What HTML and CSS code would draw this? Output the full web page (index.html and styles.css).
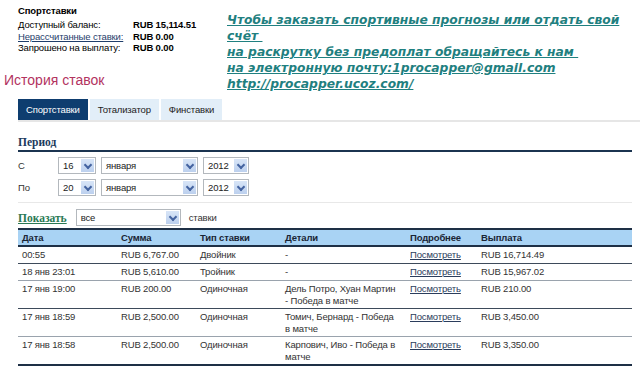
FILE: index.html
```html
<!DOCTYPE html>
<html lang="ru">
<head>
    <meta charset="UTF-8">
    <title>История ставок</title>
    <link rel="stylesheet" href="styles.css">
</head>
<body>
    <div class="top">
        <div class="left">
            <div class="account">
                <div class="account-title">Спортставки</div>
                <div class="balance-row"><span class="label">Доступный баланс:</span><b>RUB 15,114.51</b></div>
                <div class="balance-row"><a href="#" class="label link">Нерассчитанные ставки:</a><b>RUB 0.00</b></div>
                <div class="balance-row"><span class="label">Запрошено на выплату:</span><b>RUB 0.00</b></div>
            </div>
            <h1 class="history">История ставок</h1>
        </div>
        <div class="promo">
            <a href="#">Чтобы заказать спортивные прогнозы или отдать свой счёт&nbsp;<br>
            на раскрутку без предоплат обращайтесь к нам&nbsp;<br>
            на электронную почту:1procapper@gmail.com<br>
            http://procapper.ucoz.com/</a>
        </div>
    </div>

    <div class="tabs">
        <span class="tab active">Спортставки</span>
        <span class="tab">Тотализатор</span>
        <span class="tab">Финставки</span>
    </div>

    <div class="content">
        <div class="period">
            <h2 class="section-title">Период</h2>
            <div class="date-row">
                <span class="date-label">С</span>
                <div class="select day"><span>16</span><i class="arrow"></i></div>
                <div class="select month"><span>января</span><i class="arrow"></i></div>
                <div class="select year"><span>2012</span><i class="arrow"></i></div>
            </div>
            <div class="date-row">
                <span class="date-label">По</span>
                <div class="select day"><span>20</span><i class="arrow"></i></div>
                <div class="select month"><span>января</span><i class="arrow"></i></div>
                <div class="select year"><span>2012</span><i class="arrow"></i></div>
            </div>
        </div>

        <div class="filter">
            <a href="#" class="show-link">Показать</a>
            <div class="select kind"><span>все</span><i class="arrow"></i></div>
            <span>ставки</span>
        </div>

        <table class="bets">
            <colgroup>
                <col style="width: 99px">
                <col style="width: 79px">
                <col style="width: 85px">
                <col style="width: 125px">
                <col style="width: 71px">
                <col>
            </colgroup>
            <thead>
                <tr>
                    <th>Дата</th>
                    <th>Сумма</th>
                    <th>Тип ставки</th>
                    <th>Детали</th>
                    <th>Подробнее</th>
                    <th>Выплата</th>
                </tr>
            </thead>
            <tbody>
                <tr>
                    <td>00:55</td>
                    <td>RUB 6,767.00</td>
                    <td>Двойник</td>
                    <td>-</td>
                    <td><a href="#">Посмотреть</a></td>
                    <td>RUB 16,714.49</td>
                </tr>
                <tr>
                    <td>18 янв 23:01</td>
                    <td>RUB 5,610.00</td>
                    <td>Тройник</td>
                    <td>-</td>
                    <td><a href="#">Посмотреть</a></td>
                    <td>RUB 15,967.02</td>
                </tr>
                <tr class="tall">
                    <td>17 янв 19:00</td>
                    <td>RUB 200.00</td>
                    <td>Одиночная</td>
                    <td>Дель Потро, Хуан Мартин - Победа в матче</td>
                    <td><a href="#">Посмотреть</a></td>
                    <td>RUB 210.00</td>
                </tr>
                <tr class="tall">
                    <td>17 янв 18:59</td>
                    <td>RUB 2,500.00</td>
                    <td>Одиночная</td>
                    <td>Томич, Бернард - Победа в матче</td>
                    <td><a href="#">Посмотреть</a></td>
                    <td>RUB 3,450.00</td>
                </tr>
                <tr class="tall">
                    <td>17 янв 18:58</td>
                    <td>RUB 2,500.00</td>
                    <td>Одиночная</td>
                    <td>Карпович, Иво - Победа в матче</td>
                    <td><a href="#">Посмотреть</a></td>
                    <td>RUB 3,350.00</td>
                </tr>
            </tbody>
        </table>
    </div>
</body>
</html>
```

FILE: styles.css
```css
* {
    margin: 0;
    padding: 0;
    box-sizing: border-box;
}

body {
    background: #fff;
    font-family: 'Liberation Sans', Arial, sans-serif;
    font-size: 9.5px;
    letter-spacing: -0.15px;
    color: #333;
    width: 640px;
    overflow: hidden;
}

a {
    color: #2b3d5c;
}

/* top: account block + promo */
.top {
    display: flex;
    height: 99px;
}

.left {
    width: 227px;
    flex-shrink: 0;
}

.account {
    padding: 5px 0 0 18px;
    color: #000;
}

.account-title {
    font-weight: bold;
    line-height: 12px;
    margin-bottom: 2px;
}

.balance-row {
    display: flex;
    line-height: 11.5px;
}

.balance-row .label {
    width: 115px;
}

.balance-row .link {
    color: #1f3e6b;
}

.history {
    font-size: 14px;
    font-weight: normal;
    letter-spacing: 0;
    color: #b3335f;
    padding: 18px 0 0 4px;
    line-height: 16px;
}

.promo {
    padding-top: 12px;
    font-family: 'DejaVu Sans', Verdana, sans-serif;
    font-size: 12.3px;
    font-style: italic;
    font-weight: bold;
    letter-spacing: 0;
    line-height: 16px;
}

.promo a {
    color: #1f8080;
}

/* tabs */
.tabs {
    display: flex;
    margin-left: 18px;
    border-bottom: 2px solid #e6e6e6;
}

.tab {
    padding: 0 8px;
    height: 21px;
    line-height: 21px;
    background: #e2eef8;
    color: #222;
}

.tab + .tab {
    margin-left: 2px;
}

.tab.active {
    background: #0e3d6f;
    color: #fff;
}

/* period filter */
.content {
    padding: 14px 8px 0 18px;
}

.section-title {
    font-family: 'Liberation Serif', 'Times New Roman', serif;
    font-size: 11.5px;
    font-weight: bold;
    letter-spacing: 0;
    color: #1c3a5c;
    line-height: 12px;
    padding-bottom: 2px;
    border-bottom: 2px solid #1b3450;
}

.date-row {
    display: flex;
    align-items: center;
    gap: 5px;
    margin-top: 5px;
}

.date-row + .date-row {
    margin-top: 5px;
}

.date-label {
    width: 35px;
}

.select {
    display: flex;
    align-items: center;
    justify-content: space-between;
    height: 17px;
    border: 1px solid #b3b8bd;
    background: #fff;
    padding: 0 1px 0 4px;
    color: #222;
}

.select.day { width: 38px; }
.select.month { width: 97px; }
.select.year { width: 46px; }
.select.kind { width: 105px; }

.arrow {
    width: 13px;
    height: 13px;
    background: linear-gradient(#d8e5f7, #bcd0ee);
    position: relative;
}

.arrow::after {
    content: '';
    position: absolute;
    left: 4px;
    top: 3px;
    width: 4px;
    height: 4px;
    border: solid #4463a0;
    border-width: 0 2px 2px 0;
    transform: rotate(45deg);
}

.filter {
    display: flex;
    align-items: center;
    gap: 8px;
    margin-top: 6px;
    padding-top: 6px;
    border-top: 1px solid #e8e8e8;
}

.show-link {
    font-family: 'Liberation Serif', 'Times New Roman', serif;
    font-size: 11.5px;
    font-weight: bold;
    letter-spacing: 0;
    color: #2b7a55;
    margin-right: 1px;
}

/* bets table */
.bets {
    width: 100%;
    margin-top: 2px;
    border-collapse: separate;
    border-spacing: 0;
    table-layout: fixed;
}

.bets th {
    text-align: left;
    font-weight: bold;
    color: #1a2535;
    background: #a9d3f4;
    line-height: 15px;
    padding: 0 4px;
    border-top: 2px solid #1e3046;
    border-bottom: 2px solid #1e3046;
}

.bets td {
    vertical-align: top;
    padding: 2px 4px 2px;
    line-height: 12px;
    border-bottom: 1px solid #3d4a5a;
}

.bets td:nth-child(4) {
    padding-right: 8px;
}

.bets tr.tall td {
    padding-bottom: 1px;
}

.bets tr:nth-child(even) td {
    border-bottom-color: #9aa3ad;
}

.bets tr:last-child td {
    border-bottom: 2px solid #1e3046;
}
```
